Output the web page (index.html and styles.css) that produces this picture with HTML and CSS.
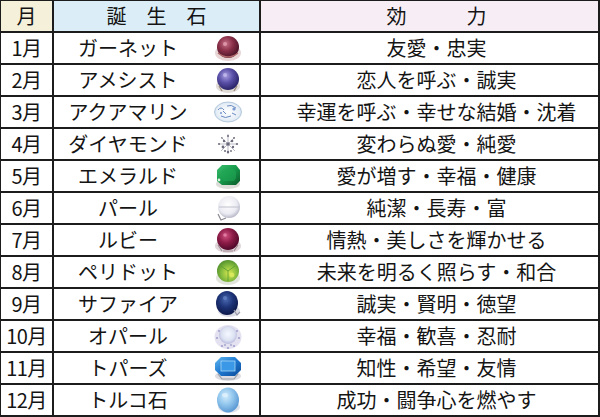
FILE: index.html
```html
<!DOCTYPE html>
<html lang="ja">
<head>
<meta charset="utf-8">
<link rel="stylesheet" href="styles.css">
</head>
<body>
<svg width="0" height="0" class="defs" aria-hidden="true">
  <defs>
    <radialGradient id="g-garnet" cx="40%" cy="35%" r="65%"><stop offset="0" stop-color="#c8708a"/><stop offset="0.5" stop-color="#8a3048"/><stop offset="1" stop-color="#4a1428"/></radialGradient>
    <radialGradient id="g-amethyst" cx="40%" cy="35%" r="65%"><stop offset="0" stop-color="#a89ee0"/><stop offset="0.5" stop-color="#5a50a8"/><stop offset="1" stop-color="#2a2468"/></radialGradient>
    <radialGradient id="g-aqua" cx="50%" cy="50%" r="60%"><stop offset="0" stop-color="#ffffff"/><stop offset="0.7" stop-color="#e6eef6"/><stop offset="1" stop-color="#b8cce0"/></radialGradient>
    <linearGradient id="g-emerald" x1="0" y1="0" x2="1" y2="1"><stop offset="0" stop-color="#3cc070"/><stop offset="0.5" stop-color="#17984a"/><stop offset="1" stop-color="#0a5a2a"/></linearGradient>
    <radialGradient id="g-pearl" cx="45%" cy="40%" r="60%"><stop offset="0" stop-color="#ffffff"/><stop offset="0.7" stop-color="#eaeaf2"/><stop offset="1" stop-color="#b8b8c8"/></radialGradient>
    <radialGradient id="g-ruby" cx="40%" cy="35%" r="65%"><stop offset="0" stop-color="#d05080"/><stop offset="0.5" stop-color="#8e1c48"/><stop offset="1" stop-color="#50082a"/></radialGradient>
    <radialGradient id="g-peridot" cx="55%" cy="60%" r="65%"><stop offset="0" stop-color="#d8e850"/><stop offset="0.5" stop-color="#8cc040"/><stop offset="1" stop-color="#4a8a2a"/></radialGradient>
    <radialGradient id="g-sapphire" cx="45%" cy="35%" r="65%"><stop offset="0" stop-color="#4a68b0"/><stop offset="0.5" stop-color="#1e3478"/><stop offset="1" stop-color="#0c1848"/></radialGradient>
    <radialGradient id="g-opal" cx="50%" cy="45%" r="60%"><stop offset="0" stop-color="#f4f8ff"/><stop offset="0.6" stop-color="#dde2f2"/><stop offset="1" stop-color="#b0b0d8"/></radialGradient>
    <linearGradient id="g-topaz" x1="0" y1="0" x2="1" y2="1"><stop offset="0" stop-color="#60b8f0"/><stop offset="0.5" stop-color="#1e78d0"/><stop offset="1" stop-color="#0c4a98"/></linearGradient>
    <radialGradient id="g-turq" cx="40%" cy="35%" r="65%"><stop offset="0" stop-color="#d4ecfc"/><stop offset="0.5" stop-color="#94c8ee"/><stop offset="1" stop-color="#5c9ad4"/></radialGradient>
  </defs>
</svg>

<div class="table">
  <div class="cell head h-month">月</div>
  <div class="cell head h-stone">誕　生　石</div>
  <div class="cell head h-effect">効　　　力</div>

  <div class="cell month">1月</div>
  <div class="cell stone"><span class="name">ガーネット</span>
    <svg class="gem" viewBox="0 0 28 28"><ellipse cx="14" cy="19" rx="13" ry="8" fill="#e8d6d6"/><circle cx="14" cy="13" r="11" fill="url(#g-garnet)"/><path d="M4 19 Q14 27 24 19" stroke="#b06a6a" stroke-width="1.4" fill="none"/><circle cx="11" cy="10" r="2" fill="#e8a8b8" opacity="0.7"/></svg></div>
  <div class="cell effect">友愛・忠実</div>

  <div class="cell month">2月</div>
  <div class="cell stone"><span class="name">アメシスト</span>
    <svg class="gem" viewBox="0 0 28 28"><ellipse cx="14" cy="20" rx="12" ry="7" fill="#e2dcd8"/><circle cx="14" cy="13" r="11" fill="url(#g-amethyst)"/><path d="M5 20 l3 5 M23 20 l-3 5" stroke="#9a8a80" stroke-width="1.4"/><circle cx="11" cy="9" r="2" fill="#c8c0f0" opacity="0.7"/></svg></div>
  <div class="cell effect">恋人を呼ぶ・誠実</div>

  <div class="cell month">3月</div>
  <div class="cell stone"><span class="name">アクアマリン</span>
    <svg class="gem" viewBox="0 0 28 28"><ellipse cx="14" cy="14" rx="13.5" ry="10" fill="url(#g-aqua)" stroke="#a8c0d8" stroke-width="0.8"/><path d="M4 12 q3 -4 6 0 M13 8 q4 -2 9 2 M7 18 q4 3 10 0 M18 15 l4 2 M9 13 l3 3" stroke="#6a8ac0" stroke-width="1" fill="none"/><circle cx="20" cy="11" r="1.6" fill="#7a9ad0"/><circle cx="7" cy="15" r="1" fill="#7a9ad0"/></svg></div>
  <div class="cell effect">幸運を呼ぶ・幸せな結婚・沈着</div>

  <div class="cell month">4月</div>
  <div class="cell stone"><span class="name">ダイヤモンド</span>
    <svg class="gem" viewBox="0 0 28 28"><path d="M14 4 v20 M5 14 h18 M7 7 l14 14 M21 7 l-14 14" stroke="#a8a8b6" stroke-width="0.8"/><g fill="#6a6a7a"><circle cx="14" cy="14" r="1.8"/><circle cx="10" cy="11" r="1.2"/><circle cx="18" cy="11" r="1.3"/><circle cx="9" cy="17" r="1.4"/><circle cx="19" cy="17" r="1.2"/><circle cx="14" cy="6" r="1"/><circle cx="14" cy="22" r="1.2"/><circle cx="5" cy="14" r="1"/><circle cx="23" cy="14" r="1.1"/><circle cx="17" cy="21" r="0.9"/><circle cx="11" cy="21" r="1"/><circle cx="8" cy="8" r="0.8"/><circle cx="20" cy="8" r="0.9"/></g></svg></div>
  <div class="cell effect">変わらぬ愛・純愛</div>

  <div class="cell month">5月</div>
  <div class="cell stone"><span class="name">エメラルド</span>
    <svg class="gem" viewBox="0 0 28 28"><ellipse cx="14" cy="22" rx="12" ry="5" fill="#dcdcd8"/><polygon points="8,3 22,3 26,8 26,19 22,23 8,23 3,19 3,8" fill="url(#g-emerald)"/><polygon points="10,7 20,7 22,10 22,16 20,19 10,19 7,16 7,10" fill="#1fa655" opacity="0.6"/><circle cx="5" cy="18" r="1.4" fill="#e0f0e0"/></svg></div>
  <div class="cell effect">愛が増す・幸福・健康</div>

  <div class="cell month">6月</div>
  <div class="cell stone"><span class="name">パール</span>
    <svg class="gem" viewBox="0 0 28 28"><circle cx="15" cy="13" r="11" fill="url(#g-pearl)"/><path d="M5 13 h20" stroke="#c0c0cc" stroke-width="1"/><path d="M4 20 l3 6 l5 -2" stroke="#8a8a96" stroke-width="1.2" fill="none"/></svg></div>
  <div class="cell effect">純潔・長寿・富</div>

  <div class="cell month">7月</div>
  <div class="cell stone"><span class="name">ルビー</span>
    <svg class="gem" viewBox="0 0 28 28"><ellipse cx="14" cy="20" rx="13" ry="7" fill="#e0d6da"/><circle cx="14" cy="13" r="11" fill="url(#g-ruby)"/><path d="M4 19 l4 6 M24 19 l-4 6 M9 25 h10" stroke="#a08890" stroke-width="1.2"/><circle cx="11" cy="9" r="1.8" fill="#e890b0" opacity="0.7"/></svg></div>
  <div class="cell effect">情熱・美しさを輝かせる</div>

  <div class="cell month">8月</div>
  <div class="cell stone"><span class="name">ペリドット</span>
    <svg class="gem" viewBox="0 0 28 28"><ellipse cx="14" cy="20" rx="12" ry="7" fill="#e0e4da"/><circle cx="14" cy="13" r="11" fill="url(#g-peridot)"/><path d="M7 8 l7 5 l7 -5 M14 13 v10" stroke="#5a9a30" stroke-width="0.8" fill="none"/><circle cx="18" cy="17" r="2.4" fill="#e2ec60" opacity="0.8"/></svg></div>
  <div class="cell effect">未来を明るく照らす・和合</div>

  <div class="cell month">9月</div>
  <div class="cell stone"><span class="name">サファイア</span>
    <svg class="gem" viewBox="0 0 28 28"><ellipse cx="15" cy="21" rx="11" ry="6" fill="#dcdce4"/><ellipse cx="13" cy="13" rx="11" ry="12" fill="url(#g-sapphire)"/><circle cx="11" cy="8" r="2" fill="#6a88c8" opacity="0.7"/><path d="M20 20 l3 5 l3 -3" stroke="#9a9aa8" stroke-width="1.2" fill="none"/></svg></div>
  <div class="cell effect">誠実・賢明・徳望</div>

  <div class="cell month">10月</div>
  <div class="cell stone"><span class="name">オパール</span>
    <svg class="gem" viewBox="0 0 28 28"><ellipse cx="14" cy="15" rx="13.5" ry="12" fill="#e4e2f0"/><circle cx="14" cy="13" r="9" fill="url(#g-opal)"/><g fill="#a0a0cc"><circle cx="3" cy="16" r="1.1"/><circle cx="25" cy="16" r="1.1"/><circle cx="8" cy="24" r="1.1"/><circle cx="20" cy="24" r="1.1"/><circle cx="14" cy="26" r="1.1"/><circle cx="5" cy="9" r="1"/><circle cx="23" cy="9" r="1"/><circle cx="11" cy="23" r="0.9"/><circle cx="17" cy="23" r="0.9"/></g></svg></div>
  <div class="cell effect">幸福・歓喜・忍耐</div>

  <div class="cell month">11月</div>
  <div class="cell stone"><span class="name">トパーズ</span>
    <svg class="gem" viewBox="0 0 28 28"><ellipse cx="14" cy="22" rx="13" ry="5" fill="#dcdce2"/><polygon points="7,3 21,3 27,9 27,16 21,22 7,22 1,16 1,9" fill="url(#g-topaz)"/><rect x="7" y="7" width="14" height="10" fill="#3a98e6" stroke="#a8d8f8" stroke-width="0.8"/><path d="M4 20 l4 5 h12 l4 -5" stroke="#9aa0a8" stroke-width="1.2" fill="none"/></svg></div>
  <div class="cell effect">知性・希望・友情</div>

  <div class="cell month">12月</div>
  <div class="cell stone"><span class="name">トルコ石</span>
    <svg class="gem" viewBox="0 0 28 28"><ellipse cx="15" cy="21" rx="11" ry="6" fill="#dde2ea"/><ellipse cx="14" cy="14" rx="11" ry="12.5" fill="url(#g-turq)"/><ellipse cx="11" cy="9" rx="3" ry="2" fill="#e6f4fe" opacity="0.7"/></svg></div>
  <div class="cell effect">成功・闘争心を燃やす</div>
</div>
</body>
</html>
```

FILE: styles.css
```css
html, body {
  margin: 0;
  padding: 0;
  background: #ffffff;
}

.defs {
  position: absolute;
  width: 0;
  height: 0;
}

.table {
  width: 600px;
  height: 417px;
  box-sizing: border-box;
  padding: 1px 2px 2px 1px;
  background: #1c1c1c;
  display: grid;
  grid-template-columns: 51px 205px 1fr;
  grid-template-rows: repeat(13, 30px);
  gap: 2px;
  font-family: "Noto Sans CJK JP", "Noto Sans", sans-serif;
  font-size: 20px;
  color: #141414;
}

.cell {
  background: #ffffff;
  display: flex;
  align-items: center;
  justify-content: center;
  line-height: 1;
  white-space: nowrap;
}

.h-month { background: #f4f0da; }
.h-stone { background: #dbeef7; }
.h-effect { background: #f7eef5; padding-left: 14px; }

.month {
  letter-spacing: -0.5px;
}

.stone {
  justify-content: flex-start;
  padding-right: 17px;
}

.name {
  flex: 1;
  text-align: center;
}

.gem {
  width: 28px;
  height: 28px;
  margin-left: 12px;
  flex: none;
}

.effect {
  padding-left: 14px;
}
```
